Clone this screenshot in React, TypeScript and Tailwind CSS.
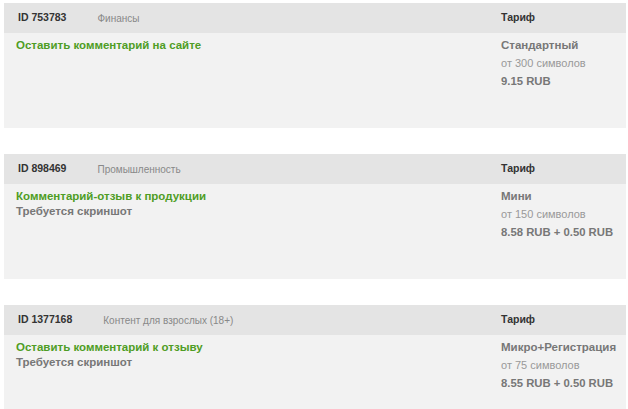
import React from "react";

type Task = {
  id: string;
  category: string;
  title: string;
  note?: string;
  tariff: string;
  min: string;
  price: string;
};

const tasks: Task[] = [
  {
    id: "ID 753783",
    category: "Финансы",
    title: "Оставить комментарий на сайте",
    tariff: "Стандартный",
    min: "от 300 символов",
    price: "9.15 RUB",
  },
  {
    id: "ID 898469",
    category: "Промышленность",
    title: "Комментарий-отзыв к продукции",
    note: "Требуется скриншот",
    tariff: "Мини",
    min: "от 150 символов",
    price: "8.58 RUB + 0.50 RUB",
  },
  {
    id: "ID 1377168",
    category: "Контент для взрослых (18+)",
    title: "Оставить комментарий к отзыву",
    note: "Требуется скриншот",
    tariff: "Микро+Регистрация",
    min: "от 75 символов",
    price: "8.55 RUB + 0.50 RUB",
  },
];

function Card({ t }: { t: Task }) {
  return (
    <div className="w-full">
      <div className="h-[30px] bg-[#e4e4e4] flex items-center">
        <div className="flex-1 flex items-center pl-[14px] gap-[31px]">
          <span className="text-[10.5px] font-bold text-[#333]">{t.id}</span>
          <span className="text-[10px] text-[#888]">{t.category}</span>
        </div>
        <div className="w-[125px] text-[10.5px] font-bold text-[#333]">Тариф</div>
      </div>
      <div className="h-[95px] bg-[#f2f2f2] flex">
        <div className="flex-1 pl-[12px] pt-[5px] flex flex-col">
          <span className="text-[11.5px] leading-[15px] font-bold text-[#4f9d25]">{t.title}</span>
          {t.note && (
            <span className="text-[11.5px] leading-[15px] font-bold text-[#777]">{t.note}</span>
          )}
        </div>
        <div className="w-[125px] pt-[3px] flex flex-col">
          <span className="text-[11.5px] leading-[18px] font-bold text-[#777]">{t.tariff}</span>
          <span className="text-[11px] leading-[18px] text-[#999]">{t.min}</span>
          <span className="text-[11.3px] leading-[18px] font-bold text-[#777]">{t.price}</span>
        </div>
      </div>
    </div>
  );
}

export default function App() {
  return (
    <div
      className="w-[628px] h-[409px] overflow-hidden bg-white pt-[3px] pl-[4px] pr-[2px] flex flex-col gap-[26px]"
      style={{ fontFamily: '"Liberation Sans", Arial, sans-serif' }}
    >
      {tasks.map((t) => (
        <Card key={t.id} t={t} />
      ))}
    </div>
  );
}
